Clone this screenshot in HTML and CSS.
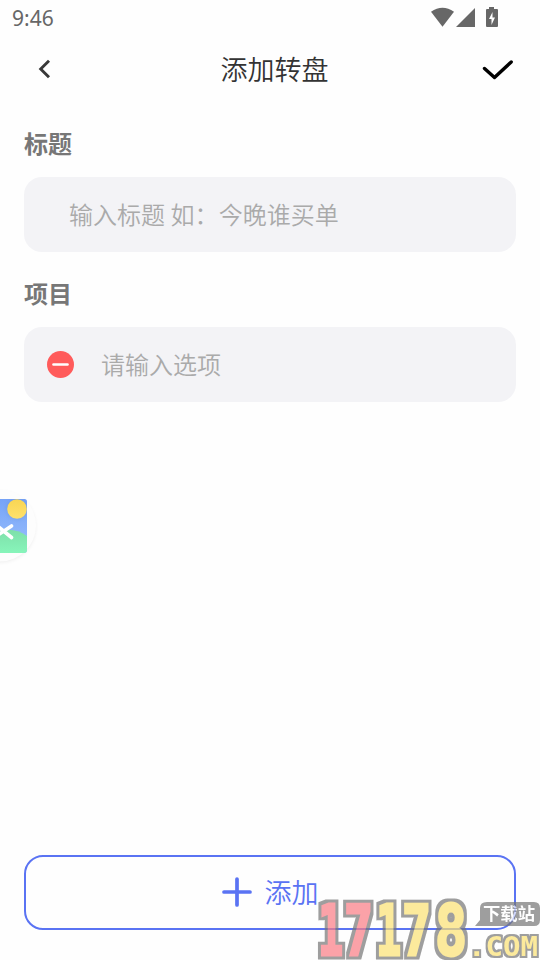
FILE: index.html
```html
<!DOCTYPE html>
<html lang="zh-CN">
<head>
<meta charset="utf-8">
<title>添加转盘</title>
<link rel="stylesheet" href="styles.css">
</head>
<body>
<div class="screen">
  <div class="status">
    <span class="clock">9:46</span>
    <svg class="status-icons" width="70" height="24" viewBox="0 0 70 24" fill="#676767">
      <path d="M1 12Q12.500 4 24 12L12.500 27Z" transform="translate(0 -.3)"/>
      <path d="M45 8V27H26Z"/>
      <path fill-rule="evenodd" d="M59 7h5v2h3q1 0 1 1v16q0 1-1 1H57q-1 0-1-1V10q0-1 1-1h2ZM62.500 12L59 19h2.500v6L65 17.500h-2.500Z"/>
    </svg>
  </div>
  <header class="header">
    <svg class="back" width="16" height="24" viewBox="0 0 16 24" fill="none" stroke="#383838" stroke-width="2.900"><path d="M13 3.700L4.700 12L13 20.300"/></svg>
    <h1 class="title">添加转盘</h1>
    <svg class="done" width="34" height="24" viewBox="0 0 34 24" fill="none" stroke="#000" stroke-width="3.400" stroke-linecap="round" stroke-linejoin="round"><path d="M4.500 11.500L14.500 20.500L31.200 5"/></svg>
  </header>
  <main class="form">
    <h2 class="label">标题</h2>
    <div class="field field-title">输入标题 如：今晚谁买单</div>
    <h2 class="label label-items">项目</h2>
    <div class="field field-item">
      <svg width="28" height="28" viewBox="0 0 28 28"><circle cx="14.500" cy="14.500" r="13.500" fill="#ff5b5b"/><path d="M7.500 14.500H21.500" stroke="#fff" stroke-width="2.600" stroke-linecap="round"/></svg>
      <span>请输入选项</span>
    </div>
  </main>
  <div class="add">
    <svg width="32" height="32" viewBox="0 0 32 32" stroke="#5a73f3" stroke-width="3.700" stroke-linecap="round"><path d="M15 3V29M2 16H28"/></svg>
    <span>添加</span>
  </div>

  <svg class="float" width="50" height="90" viewBox="0 0 50 90">
    <defs>
      <linearGradient id="sky" x2="0" y2="1"><stop stop-color="#76a3f7"/><stop offset="1" stop-color="#9bc0fd"/></linearGradient>
      <linearGradient id="hill" x2="0" y2="1"><stop stop-color="#7edfa9"/><stop offset="1" stop-color="#87f5ba"/></linearGradient>
      <linearGradient id="sun" x2="0" y2="1"><stop stop-color="#f8d553"/><stop offset="1" stop-color="#ffe16c"/></linearGradient>
      <clipPath id="tile"><path d="M0 19H24.500Q27 19 27 21.500V70Q27 73 24 73H0Z"/></clipPath>
      <filter id="soft" x="-50%" y="-50%" width="200%" height="200%"><feGaussianBlur stdDeviation="2"/></filter>
    </defs>
    <circle cx="0" cy="47" r="35" fill="#000" opacity=".08" filter="url(#soft)"/>
    <circle cx="0" cy="45.500" r="36" fill="#fdfdfd"/>
    <g clip-path="url(#tile)">
      <path d="M0 19H27V73H0Z" fill="url(#sky)"/>
      <path d="M0 51Q14 47 27 56V73H0Z" fill="url(#hill)"/>
      <circle cx="17" cy="29" r="10" fill="#5b83bd" opacity=".35" filter="url(#soft)"/>
      <circle cx="17" cy="29" r="9.800" fill="url(#sun)"/>
      <path d="M-2 55L11.500 46M-2 46.500L11.500 57.500" stroke="#fff" stroke-width="3.600" stroke-linecap="round"/>
    </g>
  </svg>

  <svg class="watermark" width="226" height="62" viewBox="0 0 226 62">
    <defs>
      <filter id="outline" x="-10" y="-10" width="250" height="80" filterUnits="userSpaceOnUse" color-interpolation-filters="sRGB">
        <feMorphology in="SourceAlpha" operator="dilate" radius="3" result="edge"/>
        <feFlood flood-color="#767676"/>
        <feComposite in2="edge" operator="in"/>
        <feMerge><feMergeNode/><feMergeNode in="SourceGraphic"/></feMerge>
      </filter>
      <filter id="outline-thin" x="140" y="20" width="100" height="50" filterUnits="userSpaceOnUse" color-interpolation-filters="sRGB">
        <feMorphology in="SourceAlpha" operator="dilate" radius="2" result="edge"/>
        <feFlood flood-color="#767676"/>
        <feComposite in2="edge" operator="in"/>
        <feMerge><feMergeNode/><feMergeNode in="SourceGraphic"/></feMerge>
      </filter>
    </defs>
    <g class="digits" filter="url(#outline)">
      <g class="red">
        <text transform="translate(3 55) scale(.6 1)">1</text>
        <text transform="translate(29 55) scale(.69 1)">7</text>
      </g>
      <g class="yellow">
        <text transform="translate(61 55) scale(.6 1)">1</text>
        <text transform="translate(87 55) scale(.69 1)">7</text>
        <text transform="translate(120 55) scale(.76 1)">8</text>
      </g>
    </g>
    <path d="M172 2H219Q225 2 225 8V20Q225 26 219 26H160L165 20V8Q165 2 172 2Z" fill="#767676"/>
    <text class="site" x="168" y="20" textLength="52" lengthAdjust="spacingAndGlyphs">下载站</text>
    <text class="com" x="153" y="56" textLength="70" lengthAdjust="spacingAndGlyphs" filter="url(#outline-thin)">.COM</text>
  </svg>
</div>
</body>
</html>
```
FILE: styles.css
```css
* { box-sizing: border-box; }
body { margin: 0; background: #fefefe; font-family: "Noto Sans CJK SC", sans-serif; }
.screen { position: relative; width: 540px; height: 960px; overflow: hidden; display: flex; flex-direction: column; }
.status { height: 36px; flex: none; display: flex; justify-content: space-between; padding: 0 40px 0 12px; color: #676767; }
.clock { font: 450 21px/37px "Noto Sans", sans-serif; }
.status-icons { overflow: visible; }
.header { height: 68px; flex: none; display: flex; align-items: center; justify-content: space-between; padding: 0 26px 2px 36px; }
.title { margin: 0 0 0 17px; font-size: 27px; line-height: 40px; font-weight: 350; color: #333; }
.form { flex: 1; padding: 0 24px; }
.label { margin: 0; height: 73px; padding: 21px 0 0; font-size: 24px; line-height: 36px; font-weight: 700; color: #777; }
.label-items { height: 75px; padding-top: 23px; }
.field { height: 75px; border-radius: 18px; background: #f3f3f6; color: #aaa; display: flex; align-items: center; font-size: 24px; line-height: 36px; font-weight: 350; padding-bottom: 1px; }
.field-title { padding-left: 45px; letter-spacing: .04px; }
.field-item { padding-left: 22px; gap: 27px; }
.add { margin: 0 24px 30px; height: 75px; flex: none; border: 2px solid #5a73f3; border-radius: 19px; display: flex; align-items: center; justify-content: center; gap: 11px; color: #5a73f3; font-size: 27px; line-height: 40px; font-weight: 350; padding-bottom: 1px; }
.float { position: absolute; left: 0; top: 480px; }
.watermark { position: absolute; left: 315px; top: 900px; overflow: visible; opacity: .7; }
.digits { font: bold 70px "DejaVu Sans Mono", monospace; stroke-width: 3px; }
.red { fill: #fb7c84; stroke: #fb7c84; }
.yellow { fill: #fce273; stroke: #fce273; }
.site { font: 700 17px "Noto Sans CJK SC", sans-serif; fill: #fff; }
.com { font: bold 26px "DejaVu Sans Mono", monospace; fill: #fce273; }
```
